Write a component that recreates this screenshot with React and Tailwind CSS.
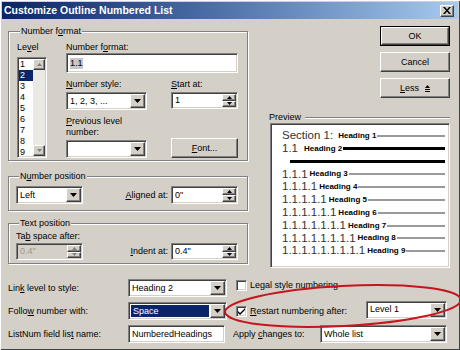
import React from 'react';

const raised = 'bg-[#d4d0c8] border border-t-white border-l-white border-b-[#404040] border-r-[#404040] shadow-[inset_-1px_-1px_0_#808080]';
const sunken = 'border border-t-[#808080] border-l-[#808080] border-b-white border-r-white shadow-[inset_1px_1px_0_#404040,inset_-1px_-1px_0_#d4d0c8]';

function U({ children }) {
  return <span className="underline underline-offset-[1px]">{children}</span>;
}

function Tri({ up, w = 7, h = 4, color = '#000' }) {
  return (
    <svg width={w} height={h} viewBox={`0 0 ${w} ${h}`}>
      <path d={up ? `M${w / 2} 0L${w} ${h}H0z` : `M0 0H${w}L${w / 2} ${h}z`} fill={color} />
    </svg>
  );
}

function DropBtn() {
  return (
    <div className={`w-[15px] h-full flex items-center justify-center ${raised}`}>
      <Tri />
    </div>
  );
}

function Combo({ value, className = '', selected }) {
  return (
    <div className={`flex items-stretch p-px h-[18px] bg-white ${sunken} ${className}`}>
      <div className={`flex-1 min-w-0 flex items-center px-[2px] ${selected ? 'bg-[#0a246a] text-white m-px' : ''}`}>{value}</div>
      <DropBtn />
    </div>
  );
}

function Spin({ value, className = '', disabled }) {
  return (
    <div className={`flex items-stretch p-px h-[17px] ${disabled ? 'bg-[#d4d0c8]' : 'bg-white'} ${sunken} ${className}`}>
      <div className={`flex-1 flex items-center px-[2px] ${disabled ? 'text-[#9a9890]' : ''}`}>{value}</div>
      <div className="w-[14px] flex flex-col">
        <div className={`flex-1 flex items-center justify-center ${raised}`}><Tri up w={5} h={3} color={disabled ? '#808080' : '#000'} /></div>
        <div className={`flex-1 flex items-center justify-center ${raised}`}><Tri w={5} h={3} color={disabled ? '#808080' : '#000'} /></div>
      </div>
    </div>
  );
}

function TextBox({ children, className = '' }) {
  return (
    <div className={`flex items-center px-[3px] bg-white ${sunken} ${className}`}>{children}</div>
  );
}

function Button({ children, className = '', primary }) {
  if (primary) {
    return (
      <div className={`border border-black ${className}`}>
        <div className={`h-full flex items-center justify-center ${raised}`}>{children}</div>
      </div>
    );
  }
  return <div className={`flex items-center justify-center ${raised} ${className}`}>{children}</div>;
}

function Group({ title, className = '', children }) {
  return (
    <fieldset className={`border border-[#808080] shadow-[inset_1px_1px_0_#fff,1px_1px_0_#fff] ${className}`}>
      <legend className="ml-[3px] px-px leading-[11px] bg-[#d4d0c8]">{title}</legend>
      {children}
    </fieldset>
  );
}

function Check({ checked }) {
  return (
    <div className={`w-[11px] h-[11px] bg-white flex items-center justify-center ${sunken}`}>
      {checked && (
        <svg width="7" height="7" viewBox="0 0 7 7">
          <path d="M0 3l2 2 5-5v2l-5 5-2-2z" fill="#000" />
        </svg>
      )}
    </div>
  );
}

function ListBox({ className = '' }) {
  const levels = [1, 2, 3, 4, 5, 6, 7, 8, 9];
  return (
    <div className={`flex p-px bg-white ${sunken} ${className}`}>
      <div className="flex-1 flex flex-col">
        {levels.map(n => (
          <div key={n} className={`h-[11.1px] leading-[11px] pl-px ${n === 2 ? 'bg-[#0a246a] text-white' : ''}`}>{n}</div>
        ))}
      </div>
      <div className="w-[12px] flex flex-col bg-[#ebe9e4]">
        <div className={`h-[11px] flex items-center justify-center ${raised}`}><Tri up w={5} h={3} color="#808080" /></div>
        <div className="flex-1" />
        <div className={`h-[11px] flex items-center justify-center ${raised}`}><Tri w={5} h={3} color="#808080" /></div>
      </div>
    </div>
  );
}

const previewRows = [
  ['1.1.1', 'Heading 3'],
  ['1.1.1.1', 'Heading 4'],
  ['1.1.1.1.1', 'Heading 5'],
  ['1.1.1.1.1.1', 'Heading 6'],
  ['1.1.1.1.1.1.1', 'Heading 7'],
  ['1.1.1.1.1.1.1.1', 'Heading 8'],
  ['1.1.1.1.1.1.1.1.1', 'Heading 9'],
];

function Preview() {
  return (
    <div className={`ml-[2px] h-[145px] bg-white pl-[11px] pr-[4px] pt-[5px] ${sunken}`}>
      <div className="flex items-center h-[13px]">
        <span className="text-[11.5px] leading-none text-[#333]">Section 1:</span>
        <span className="ml-[5px] text-[8px] font-bold leading-none">Heading 1</span>
        <div className="flex-1 ml-px h-[2px] bg-[#9a9a9a]" />
      </div>
      <div className="flex items-center h-[13px]">
        <span className="text-[11.5px] leading-none text-[#333]">1.1</span>
        <span className="ml-[6px] text-[8px] font-bold leading-none">Heading 2</span>
        <div className="flex-1 ml-px h-[3px] bg-black" />
      </div>
      <div className="flex items-center h-[13px] pl-[8px]">
        <div className="flex-1 h-[3px] bg-black" />
      </div>
      {previewRows.map(([num, head]) => (
        <div key={head} className="flex items-center h-[12.8px]">
          <span className="text-[11.5px] leading-none text-[#333]">{num}</span>
          <span className="ml-[2px] text-[8px] font-bold leading-none">{head}</span>
          <div className="flex-1 ml-px h-[2px] bg-[#9a9a9a]" />
        </div>
      ))}
    </div>
  );
}

export default function App() {
  return (
    <div className="relative w-[460px] h-[350px] overflow-hidden bg-[#d4d0c8] font-['Liberation_Sans',Arial,sans-serif] text-[9px] leading-[11px] text-black shadow-[inset_1px_1px_0_#fff,inset_-1px_-1px_0_#404040]">
      {/* title bar */}
      <div className="mx-[2px] mt-[2px] h-[17px] flex items-center pl-[2px] pr-[4px] bg-linear-to-r from-[#0a246a] to-[#a6caf0]">
        <span className="text-white font-bold text-[10.5px] leading-none">Customize Outline Numbered List</span>
        <div className={`ml-auto w-[14px] h-[12px] flex items-center justify-center ${raised}`}>
          <svg width="8" height="7" viewBox="0 0 8 7">
            <path d="M0 0h2l2 2.5L6 0h2L5 3.5 8 7H6L4 4.5 2 7H0l3-3.5z" fill="#000" />
          </svg>
        </div>
      </div>

      <div className="flex pl-[8px] pr-[10px] pt-[7px]">
        {/* left column */}
        <div className="w-[240px] flex flex-col">
          <Group title={<>Number f<U>o</U>rmat</>} className="px-[8px] pb-[2px]">
            <div className="flex mt-[5px]">
              <div className="w-[30px] flex flex-col">
                <div>Le<U>v</U>el</div>
                <ListBox className="mt-[4px] h-[101px]" />
              </div>
              <div className="ml-[19px] w-[172px] flex flex-col">
                <div>Number f<U>o</U>rmat:</div>
                <TextBox className="h-[20px]"><span className="bg-[#c8c8c8]">1.1</span></TextBox>
                <div className="flex mt-[6px]">
                  <div className="w-[81px] flex flex-col">
                    <div><U>N</U>umber style:</div>
                    <Combo value="1, 2, 3, ..." className="mt-[2px]" />
                    <div className="mt-[6px]"><U>P</U>revious level<br />number:</div>
                    <Combo value="" className="mt-[2px]" />
                  </div>
                  <div className="ml-[24px] w-[67px] flex flex-col">
                    <div><U>S</U>tart at:</div>
                    <Spin value="1" className="mt-[2px]" />
                    <Button className="mt-auto h-[20px]"><span><U>F</U>ont...</span></Button>
                  </div>
                </div>
              </div>
            </div>
          </Group>

          <Group title={<>N<U>u</U>mber position</>} className="mt-[10px] pl-[7px] pr-[9px] pb-[6px]">
            <div className="flex items-center mt-[4px]">
              <Combo value="Left" className="w-[67px]" />
              <div className="ml-auto mr-[3px]"><U>A</U>ligned at:</div>
              <Spin value={'0"'} className="w-[67px] h-[18px]" />
            </div>
          </Group>

          <Group title="Text position" className="mt-[7px] pl-[7px] pr-[9px] pb-[3px]">
            <div className="mt-[2px]">Ta<U>b</U> space after:</div>
            <div className="flex items-center mt-[1px]">
              <Spin value={'0.4"'} disabled className="w-[67px] h-[16px]" />
              <div className="ml-auto mr-[3px]"><U>I</U>ndent at:</div>
              <Spin value={'0.4"'} className="w-[67px] h-[16px]" />
            </div>
          </Group>
        </div>

        {/* right column */}
        <div className="ml-auto w-[182px] flex flex-col">
          <Button primary className="self-end w-[70px] h-[20px]">OK</Button>
          <Button className="self-end w-[70px] h-[20px] mt-[6px]">Cancel</Button>
          <Button className="self-end w-[70px] h-[20px] mt-[6px]">
            <span><U>L</U>ess</span>
            <svg className="ml-[6px]" width="5" height="7" viewBox="0 0 5 7">
              <path d="M2.5 0L5 3H0z" fill="#000" />
              <rect y="4" width="5" height="1" fill="#000" />
              <rect y="6" width="5" height="1" fill="#000" />
            </svg>
          </Button>
          <div className="flex items-center mt-[14px] ml-px">
            <span>Preview</span>
            <div className="flex-1 ml-[4px] h-[2px] border-t border-t-[#808080] border-b border-b-white" />
          </div>
          <Preview />
        </div>
      </div>

      {/* bottom rows */}
      <div className="flex pl-[8px] mt-[11px]">
        <div className="w-[219px] flex flex-col gap-[5px]">
          <div className="h-[18px] flex items-center">
            <span className="flex-1">Lin<U>k</U> level to style:</span>
            <Combo value="Heading 2" className="w-[99px]" />
          </div>
          <div className="h-[18px] flex items-center">
            <span className="flex-1">Follo<U>w</U> number with:</span>
            <Combo value="Space" selected className="w-[99px]" />
          </div>
          <div className="h-[18px] flex items-center">
            <span className="flex-1">ListNum field lis<U>t</U> name:</span>
            <TextBox className="w-[97px] h-[18px] mr-[2px]">NumberedHeadings</TextBox>
          </div>
        </div>
        <div className="ml-[6px] w-[214px] flex flex-col gap-[5px]">
          <div className="h-[18px] flex items-center pb-[5px] pl-[3px]">
            <Check />
            <span className="ml-[3px]">Le<U>g</U>al style numbering</span>
          </div>
          <div className="h-[18px] flex items-center pl-[3px]">
            <Check checked />
            <span className="ml-[3px]"><U>R</U>estart numbering after:</span>
            <Combo value="Level 1" className="ml-auto w-[81px] -mt-[3px]" />
          </div>
          <div className="h-[18px] flex items-center">
            <span>Apply <U>c</U>hanges to:</span>
            <Combo value="Whole list" className="ml-auto w-[127px]" />
          </div>
        </div>
      </div>

      {/* annotation */}
      <svg className="absolute left-0 top-0 pointer-events-none" width="460" height="350">
        <ellipse cx="343" cy="306" rx="118" ry="20" transform="rotate(-3 343 306)" fill="none" stroke="#c8141c" strokeWidth="2" />
      </svg>
    </div>
  );
}
